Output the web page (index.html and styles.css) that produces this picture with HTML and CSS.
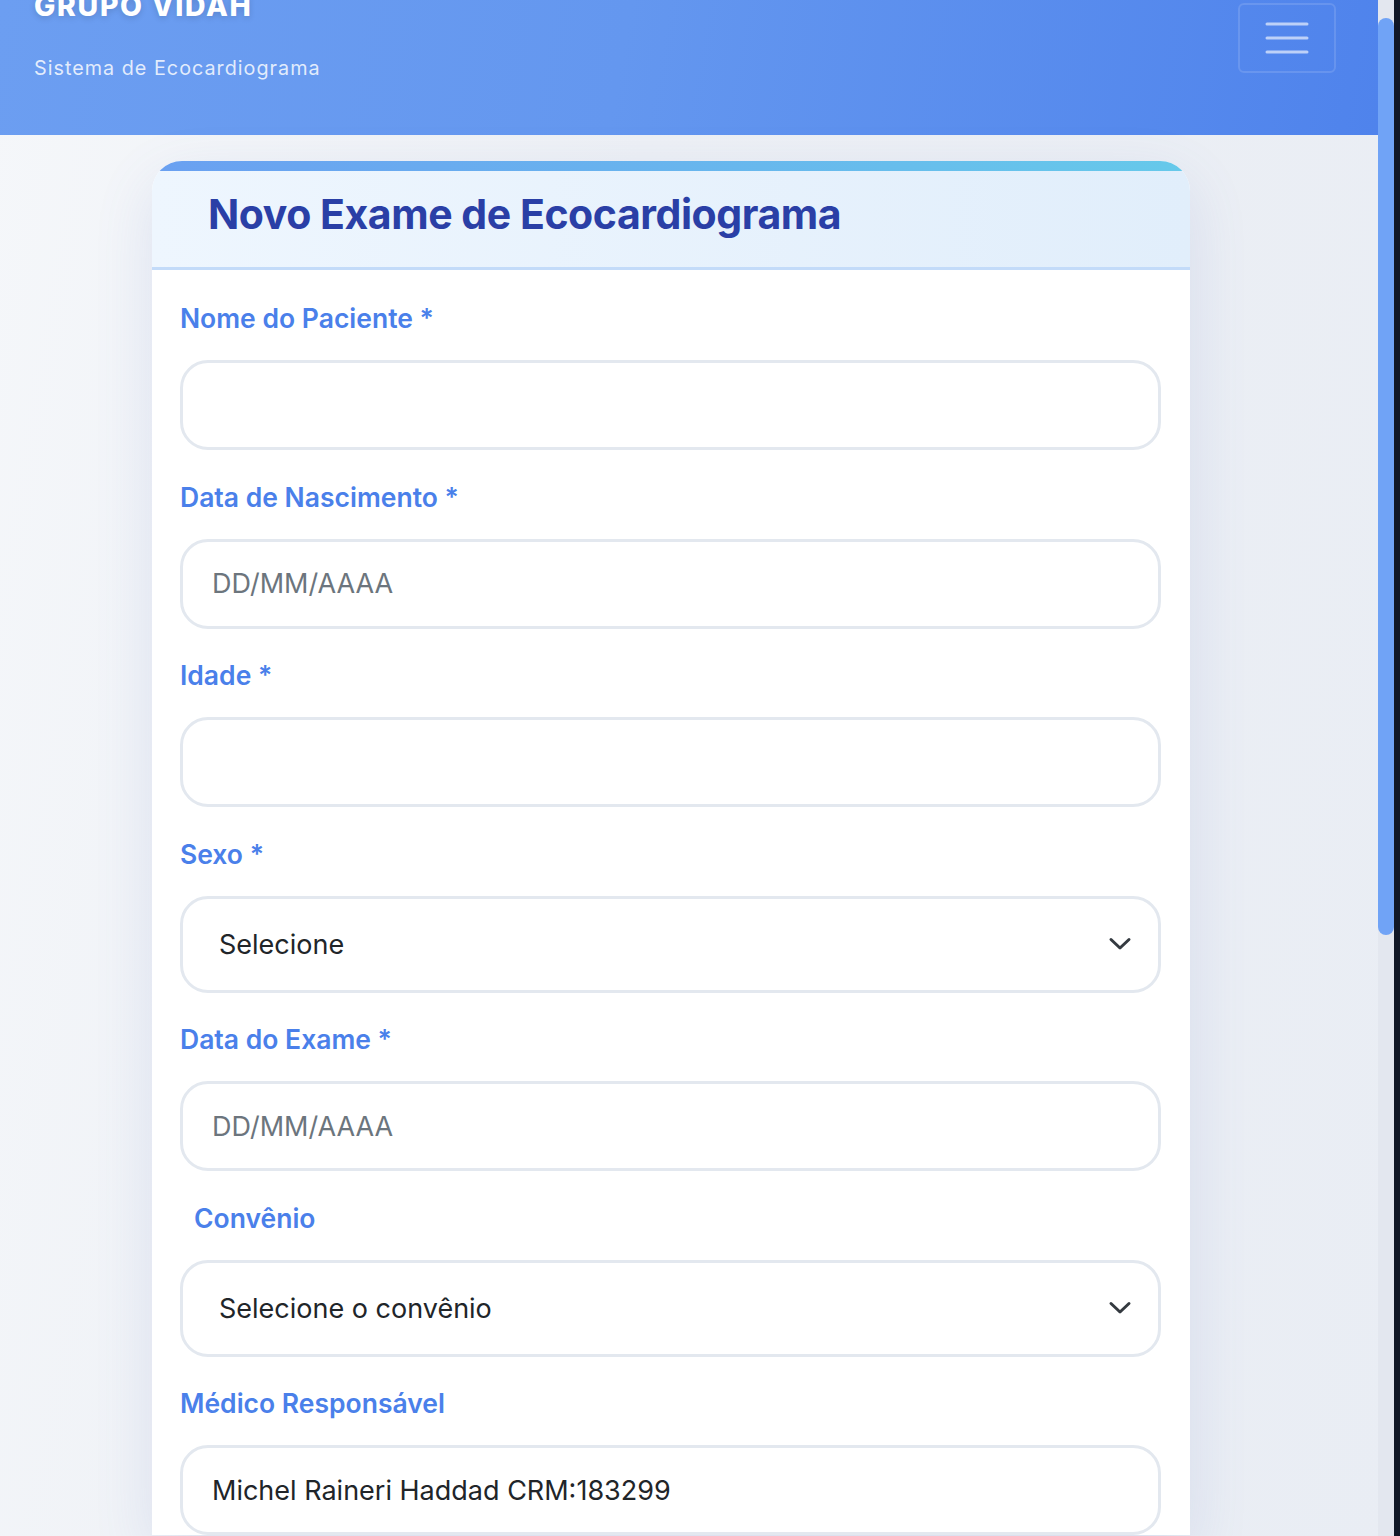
FILE: index.html
```html
<!DOCTYPE html>
<html lang="pt-BR">
<head>
<meta charset="utf-8">
<title>Novo Exame de Ecocardiograma</title>
<link rel="stylesheet" href="styles.css">
</head>
<body>
<div class="page">
  <header class="topbar">
    <div class="brand">
      <div class="brand-name">GRUPO VIDAH</div>
      <div class="brand-sub">Sistema de Ecocardiograma</div>
    </div>
    <button class="menu-btn" aria-label="Menu">
      <svg width="44" height="32" viewBox="0 0 44 32"><g stroke="rgba(255,255,255,0.62)" stroke-width="3" stroke-linecap="round"><line x1="2" y1="2" x2="42" y2="2"/><line x1="2" y1="16" x2="42" y2="16"/><line x1="2" y1="30" x2="42" y2="30"/></g></svg>
    </button>
  </header>
  <main class="content">
    <section class="card">
      <div class="card-accent"></div>
      <div class="card-head">
        <h1 class="card-title">Novo Exame de Ecocardiograma</h1>
      </div>
      <form class="card-body">
        <div class="field">
          <label class="label">Nome do Paciente *</label>
          <input class="control" type="text">
        </div>
        <div class="field">
          <label class="label">Data de Nascimento *</label>
          <input class="control" type="text" placeholder="DD/MM/AAAA">
        </div>
        <div class="field">
          <label class="label">Idade *</label>
          <input class="control" type="text">
        </div>
        <div class="field">
          <label class="label">Sexo *</label>
          <div class="select">Selecione<svg class="chev" width="24" height="16" viewBox="0 0 24 16"><path d="M3 3.5 L12 12 L21 3.5" fill="none" stroke="#343a40" stroke-width="3" stroke-linecap="round" stroke-linejoin="round"/></svg></div>
        </div>
        <div class="field">
          <label class="label">Data do Exame *</label>
          <input class="control" type="text" placeholder="DD/MM/AAAA">
        </div>
        <div class="field">
          <label class="label label-indent">Convênio</label>
          <div class="select">Selecione o convênio<svg class="chev" width="24" height="16" viewBox="0 0 24 16"><path d="M3 3.5 L12 12 L21 3.5" fill="none" stroke="#343a40" stroke-width="3" stroke-linecap="round" stroke-linejoin="round"/></svg></div>
        </div>
        <div class="field">
          <label class="label">Médico Responsável</label>
          <input class="control" type="text" value="Michel Raineri Haddad CRM:183299">
        </div>
      </form>
    </section>
  </main>
</div>
<div class="scrollbar">
  <div class="track"><div class="thumb"></div></div>
  <div class="edge"></div>
</div>
</body>
</html>
```

FILE: styles.css
```css
html, body {
  margin: 0;
  padding: 0;
  height: 1536px;
  overflow: hidden;
}
body {
  display: flex;
  font-family: Inter, "Noto Sans", "Liberation Sans", sans-serif;
  background: linear-gradient(100deg, #f5f7fa 0%, #edf0f5 40%, #e9edf4 100%);
}
.page {
  flex: 1;
  min-width: 0;
  display: flex;
  flex-direction: column;
}
.topbar {
  height: 135px;
  flex: none;
  display: flex;
  justify-content: space-between;
  align-items: flex-start;
  padding: 0 42px 0 34px;
  background: linear-gradient(100deg, #6c9ef1 0%, #6497ef 45%, #4f83ec 100%);
  box-sizing: border-box;
}
.brand-name {
  margin-top: -10px;
  font-size: 28.4px;
  line-height: 32px;
  font-weight: 800;
  letter-spacing: 1.7px;
  color: #fff;
  text-shadow: 0 2px 6px rgba(0,0,0,0.15);
}
.brand-sub {
  margin-top: 34px;
  font-size: 19.8px;
  line-height: 24px;
  letter-spacing: 1px;
  color: rgba(255,255,255,0.82);
}
.menu-btn {
  margin-top: 3px;
  width: 98px;
  height: 70px;
  border: 2px solid rgba(255,255,255,0.13);
  border-radius: 6px;
  background: transparent;
  display: flex;
  align-items: center;
  justify-content: center;
  padding: 0;
}
.content {
  padding: 26px 0 0 152px;
}
.card {
  width: 1038px;
  background: #fff;
  border-radius: 30px 30px 0 0;
  overflow: hidden;
  box-shadow: 0 20px 60px rgba(90, 110, 190, 0.14);
}
.card-accent {
  height: 10px;
  background: linear-gradient(90deg, #6aa0f1 0%, #66c9ea 100%);
}
.card-head {
  height: 99px;
  box-sizing: border-box;
  padding: 0 0 0 56px;
  display: flex;
  align-items: center;
  background: linear-gradient(90deg, #eef6fe 0%, #e1eefb 100%);
  border-bottom: 3px solid #c3dbf9;
}
.card-title {
  margin: -10px 0 0;
  font-size: 41px;
  font-weight: 700;
  letter-spacing: -0.45px;
  color: #2a3fa6;
}
.card-body {
  padding: 30px 29px 0 28px;
  display: flex;
  flex-direction: column;
  gap: 28.5px;
}
.field {
  display: flex;
  flex-direction: column;
}
.label {
  display: block;
  height: 36px;
  line-height: 36px;
  margin-bottom: 24px;
  font-size: 26.5px;
  font-weight: 600;
  color: #4a80ea;
}
.label-indent {
  padding-left: 14px;
}
.control {
  height: 90px;
  box-sizing: border-box;
  border: 3px solid #e3e8ef;
  border-radius: 28px;
  padding: 0 29px;
  font-family: inherit;
  font-size: 27px;
  color: #212529;
  background: #fff;
  outline: none;
}
.control::placeholder {
  color: #6c757d;
}
.select {
  height: 97px;
  box-sizing: border-box;
  border: 3px solid #e3e8ef;
  border-radius: 28px;
  padding: 0 26px 0 36px;
  display: flex;
  align-items: center;
  justify-content: space-between;
  font-size: 27px;
  color: #212529;
}
.chev {
  margin-top: 0;
}
.scrollbar {
  width: 22px;
  flex: none;
  display: flex;
  height: 1536px;
}
.track {
  width: 16px;
  background: #e3e7ef;
}
.thumb {
  margin-top: 18px;
  height: 917px;
  border-radius: 8px;
  background: #70a3f6;
}
.edge {
  width: 6px;
  background: #111827;
}
```
